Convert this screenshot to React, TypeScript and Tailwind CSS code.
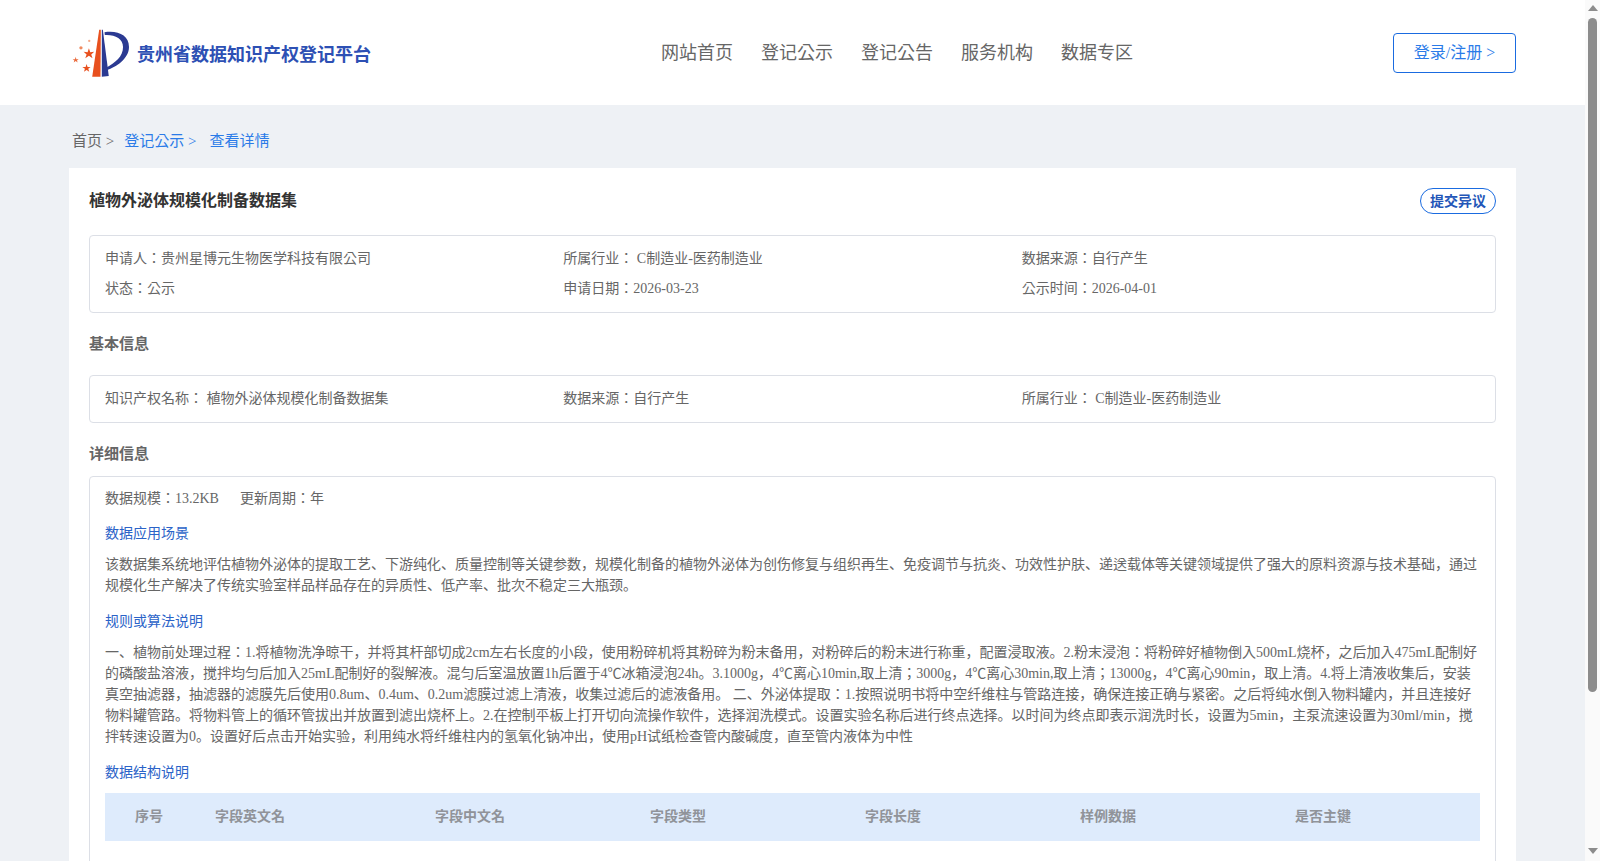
import React from "react";

const font = { fontFamily: '"Liberation Serif","Noto Sans CJK KR",serif' };

function Logo() {
  return (
    <svg width="63" height="53" viewBox="30 20 190 160" className="mt-[1px] shrink-0">
      <polygon points="118,28 123,28 122,170 97,170" fill="#e8501e" />
      <polygon points="126,28 129,28 147,168 126,170" fill="#2b3a92" />
      <path d="M134,36 C175,30 208,45 208,80 C208,115 170,140 141,150 L140,142 C165,128 190,110 190,80 C190,55 165,42 135,44 Z" fill="#2b3a92" />
      <polygon points="87,84 91,96 103,95 94,103 98,114 87,107 76,114 80,103 71,95 83,96" fill="#e8501e" />
      <polygon points="80,132 83,141 92,141 85,146 88,155 80,150 72,155 75,146 67,141 77,141" fill="#e8501e" />
      <polygon points="47,110 49,117 56,117 51,121 53,127 47,123 41,127 43,121 38,117 45,117" fill="#ea6a3c" />
      <circle cx="63" cy="83" r="5" fill="#f08a60" />
      <circle cx="88" cy="62" r="3.5" fill="#f4a888" />
    </svg>
  );
}

const nav = ["网站首页", "登记公示", "登记公告", "服务机构", "数据专区"];
const cols = [
  { t: "序号", c: "w-[110px] pl-[30px]" },
  { t: "字段英文名", c: "w-[220px]" },
  { t: "字段中文名", c: "w-[215px]" },
  { t: "字段类型", c: "w-[215px]" },
  { t: "字段长度", c: "w-[215px]" },
  { t: "样例数据", c: "w-[215px]" },
  { t: "是否主键", c: "flex-1" },
];

function Row({ items }: { items: string[] }) {
  return (
    <div className="grid grid-cols-3 leading-[30px]">
      {items.map((t) => (
        <div key={t}>{t}</div>
      ))}
    </div>
  );
}

function Scrollbar() {
  return (
    <div className="flex h-full w-[15px] shrink-0 flex-col items-center bg-[#fafafa]">
      <svg width="10" height="6" viewBox="0 0 10 6" className="mt-[5px] shrink-0">
        <polygon points="5,0 10,6 0,6" fill="#8c8c8c" />
      </svg>
      <div className="mt-[7px] h-[674px] w-[9px] rounded-full bg-[#8c8c8c]" />
      <svg width="10" height="6" viewBox="0 0 10 6" className="mt-auto mb-[7px] shrink-0">
        <polygon points="0,0 10,0 5,6" fill="#8c8c8c" />
      </svg>
    </div>
  );
}

export default function App() {
  return (
    <div style={font} className="flex h-[861px] overflow-hidden text-[14px] text-[#666]">
      <div className="min-w-0 flex-1 bg-[#eef1f5]">
        <header className="flex h-[105px] items-center bg-white pr-[69px]">
          <div className="flex w-[661px] items-center pl-[70px]">
            <Logo />
            <span className="ml-[4px] mt-[6px] text-[18px] font-bold text-[#2d50b4]">贵州省数据知识产权登记平台</span>
          </div>
          <nav className="mt-[1px] flex gap-[28px] text-[18px] text-[#666]">
            {nav.map((n) => (
              <span key={n}>{n}</span>
            ))}
          </nav>
          <button className="ml-auto h-[40px] w-[123px] rounded-[4px] border border-[#1a6be0] pt-[1px] text-[16px] text-[#2b7be8]">登录/注册 &gt;</button>
        </header>

        <div className="flex h-[63px] items-center pl-[72px] pt-[10px] text-[15px]">
          <span>首页 &gt;</span>
          <span className="ml-[10px] text-[#2b7be8]">登记公示 &gt;</span>
          <span className="ml-[13px] text-[#2b7be8]">查看详情</span>
        </div>

        <main className="mx-[69px] bg-white px-[20px] pt-[20px] pb-[20px]">
          <div className="flex h-[26px] items-center justify-between">
            <h1 className="text-[16px] font-bold text-[#333]">植物外泌体规模化制备数据集</h1>
            <button className="h-[26px] w-[76px] rounded-[13px] border border-[#1a6be0] text-[14px] font-bold text-[#2356b8]">提交异议</button>
          </div>

          <section className="mt-[21px] rounded-[4px] border border-[#dcdfe6] px-[15px] py-[8px]">
            <Row items={["申请人：贵州星博元生物医学科技有限公司", "所属行业： C制造业-医药制造业", "数据来源：自行产生"]} />
            <Row items={["状态：公示", "申请日期：2026-03-23", "公示时间：2026-04-01"]} />
          </section>

          <h2 className="mt-[20px] text-[15px] font-bold leading-[22px] text-[#666]">基本信息</h2>
          <section className="mt-[20px] rounded-[4px] border border-[#dcdfe6] px-[15px] py-[8px]">
            <Row items={["知识产权名称： 植物外泌体规模化制备数据集", "数据来源：自行产生", "所属行业： C制造业-医药制造业"]} />
          </section>

          <h2 className="mt-[20px] text-[15px] font-bold leading-[22px] text-[#666]">详细信息</h2>
          <section className="mt-[11px] rounded-[4px] border border-[#dcdfe6] px-[15px] pb-[20px]">
            <div className="flex gap-[21px] pt-[11px] leading-[21px]">
              <span>数据规模：13.2KB</span>
              <span>更新周期：年</span>
            </div>
            <h3 className="mt-[14px] leading-[21px] text-[#2b63c8]">数据应用场景</h3>
            <p className="mt-[10px] leading-[21px]">
              该数据集系统地评估植物外泌体的提取工艺、下游纯化、质量控制等关键参数，规模化制备的植物外泌体为创伤修复与组织再生、免疫调节与抗炎、功效性护肤、递送载体等关键领域提供了强大的原料资源与技术基础，通过规模化生产解决了传统实验室样品样品存在的异质性、低产率、批次不稳定三大瓶颈。
            </p>
            <h3 className="mt-[15px] leading-[21px] text-[#2b63c8]">规则或算法说明</h3>
            <p className="mt-[10px] leading-[21px]">
              一、植物前处理过程：1.将植物洗净晾干，并将其杆部切成2cm左右长度的小段，使用粉碎机将其粉碎为粉末备用，对粉碎后的粉末进行称重，配置浸取液。2.粉末浸泡：将粉碎好植物倒入500mL烧杯，之后加入475mL配制好的磷酸盐溶液，搅拌均匀后加入25mL配制好的裂解液。混匀后室温放置1h后置于4℃冰箱浸泡24h。3.1000g，4℃离心10min,取上清；3000g，4℃离心30min,取上清；13000g，4℃离心90min，取上清。4.将上清液收集后，安装真空抽滤器，抽滤器的滤膜先后使用0.8um、0.4um、0.2um滤膜过滤上清液，收集过滤后的滤液备用。 二、外泌体提取：1.按照说明书将中空纤维柱与管路连接，确保连接正确与紧密。之后将纯水倒入物料罐内，并且连接好物料罐管路。将物料管上的循环管拔出并放置到滤出烧杯上。2.在控制平板上打开切向流操作软件，选择润洗模式。设置实验名称后进行终点选择。以时间为终点即表示润洗时长，设置为5min，主泵流速设置为30ml/min，搅拌转速设置为0。设置好后点击开始实验，利用纯水将纤维柱内的氢氧化钠冲出，使用pH试纸检查管内酸碱度，直至管内液体为中性
            </p>
            <h3 className="mt-[15px] leading-[21px] text-[#2b63c8]">数据结构说明</h3>
            <div className="mt-[10px] flex h-[48px] items-center bg-[#deebfc] pb-[1px] font-bold text-[#909399]">
              {cols.map((c) => (
                <div key={c.t} className={c.c}>{c.t}</div>
              ))}
            </div>
            <div className="h-[60px]" />
          </section>
        </main>
      </div>
      <Scrollbar />
    </div>
  );
}
